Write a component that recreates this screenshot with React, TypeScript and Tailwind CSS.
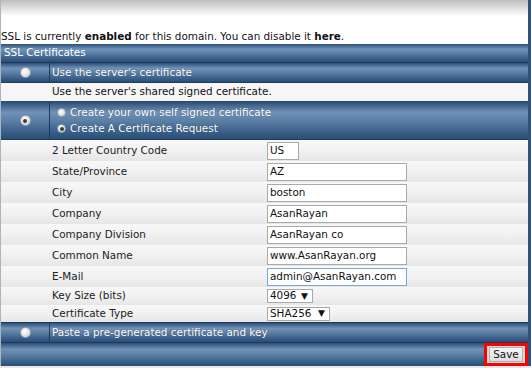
import React from 'react';

const font = { fontFamily: '"DejaVu Sans", Verdana, sans-serif' };

const BLUE =
  'bg-[linear-gradient(to_bottom,#2c4f7a_0%,#7192b6_28%,#5a7ea4_52%,#3d628c_78%,#2b4d76_100%)]';
const GREY = 'bg-[linear-gradient(to_bottom,#f8f8f8_0%,#f1f1f1_50%,#e6e6e6_100%)]';

function Radio({ checked = false, size = 'big' }: { checked?: boolean; size?: 'big' | 'small' }) {
  const dim = size === 'big' ? 'w-[11px] h-[11px]' : 'w-[9px] h-[9px]';
  return (
    <span
      className={`${dim} inline-flex items-center justify-center rounded-full border border-[#9aa6b2] bg-[radial-gradient(circle_at_40%_35%,#ffffff_0%,#e4e4e4_55%,#c4c4c4_100%)]`}
    >
      {checked && <span className="w-[4px] h-[4px] rounded-full bg-[#3a3a3a]" />}
    </span>
  );
}

function BlueRow({ children, radio, h = 'h-[20px]' }: { children: React.ReactNode; radio?: React.ReactNode; h?: string }) {
  return (
    <div className={`flex ${h} ${BLUE} border-b border-[#1f3a5c] text-white`}>
      <div className="w-[49px] flex items-center justify-center border-r border-[#1f3a5c] shrink-0">{radio}</div>
      <div className="flex-1 pl-[2px] flex items-center [text-shadow:0_0_1px_rgba(0,0,0,0.4)]">{children}</div>
    </div>
  );
}

function Field({ label, value, w = 'w-[140px]', focus = false, h = 'h-[21px]' }: { label: string; value: string; w?: string; focus?: boolean; h?: string }) {
  return (
    <div className={`flex items-center ${h} ${GREY}`}>
      <div className="w-[51px] shrink-0" />
      <div className="w-[215px] shrink-0 text-[#222]">{label}</div>
      <div
        className={`${w} h-[18px] bg-white border ${focus ? 'border-[#7aa7da]' : 'border-[#a9a9a9]'} flex items-center px-[2px] text-[#111]`}
      >
        {value}
      </div>
    </div>
  );
}

function SelectField({ label, value, w, h }: { label: string; value: string; w: string; h: string }) {
  return (
    <div className={`flex items-center ${h} ${GREY}`}>
      <div className="w-[51px] shrink-0" />
      <div className="w-[215px] shrink-0 text-[#222]">{label}</div>
      <div className={`${w} h-[14px] bg-white border border-[#a9a9a9] flex items-center justify-between px-[2px] text-[#111]`}>
        <span>{value}</span>
        <span className="text-[9px] leading-none pr-[2px]">▼</span>
      </div>
    </div>
  );
}

export default function App() {
  return (
    <div className="w-[531px] h-[368px] bg-white overflow-hidden text-[10.4px]" style={font}>
      {/* top shadow + status line */}
      <div className="h-[44px] border-l border-[#a8b6c4] border-r-[3px] border-r-[#2f527c] flex flex-col">
        <div className="h-[16px] bg-[linear-gradient(to_bottom,#bdbdbd,#ffffff)]" />
        <div className="flex-1 flex items-end pb-[1px] text-[#111] leading-[13px]">
          <span>
            SSL is currently <b>enabled</b> for this domain. You can disable it <b>here</b>.
          </span>
        </div>
      </div>

      <div className="border-l border-[#a8b6c4] border-r-[3px] border-r-[#2f527c]">
        {/* header */}
        <div className={`h-[19px] ${BLUE} border-b border-[#1f3a5c] text-white flex items-center pl-[3px]`}>
          SSL Certificates
        </div>

        <BlueRow radio={<Radio />}>Use the server's certificate</BlueRow>

        <div className="h-[19px] bg-[#f6f6f6] flex items-center pl-[51px] text-[#111] border-b border-[#2c4a6e]">
          Use the server's shared signed certificate.
        </div>

        <BlueRow radio={<Radio checked />} h="h-[38px]">
          <div className="flex flex-col pl-[5px]">
            <div className="flex items-center gap-[4px] h-[16px]">
              <Radio size="small" />
              <span>Create your own self signed certificate</span>
            </div>
            <div className="flex items-center gap-[4px] h-[16px]">
              <Radio size="small" checked />
              <span>Create A Certificate Request</span>
            </div>
          </div>
        </BlueRow>

        <Field label="2 Letter Country Code" value="US" w="w-[32px]" />
        <Field label="State/Province" value="AZ" />
        <Field label="City" value="boston" />
        <Field label="Company" value="AsanRayan" />
        <Field label="Company Division" value="AsanRayan co" />
        <Field label="Common Name" value="www.AsanRayan.org" />
        <Field label="E-Mail" value="admin@AsanRayan.com" focus />
        <SelectField label="Key Size (bits)" value="4096" w="w-[46px]" h="h-[18px]" />
        <SelectField label="Certificate Type" value="SHA256" w="w-[63px]" h="h-[17px]" />

        <div className="border-t border-[#1f3a5c]">
          <BlueRow radio={<Radio />}>Paste a pre-generated certificate and key</BlueRow>
        </div>

        {/* footer */}
        <div className={`h-[23px] ${BLUE} flex items-center justify-end`}>
          <div className="border-[3px] border-[#ff0000] h-[23px] w-[44px] flex items-center justify-center bg-[#dcdcdc]">
            <button className="h-[15px] px-[3px] text-[10.4px] leading-none text-[#111] bg-[linear-gradient(to_bottom,#f6f6f6,#dedede)] border border-[#b0b0b0]">
              Save
            </button>
          </div>
        </div>
      </div>
      <div className="h-[2px] bg-[#e8e8e8]" />
    </div>
  );
}
